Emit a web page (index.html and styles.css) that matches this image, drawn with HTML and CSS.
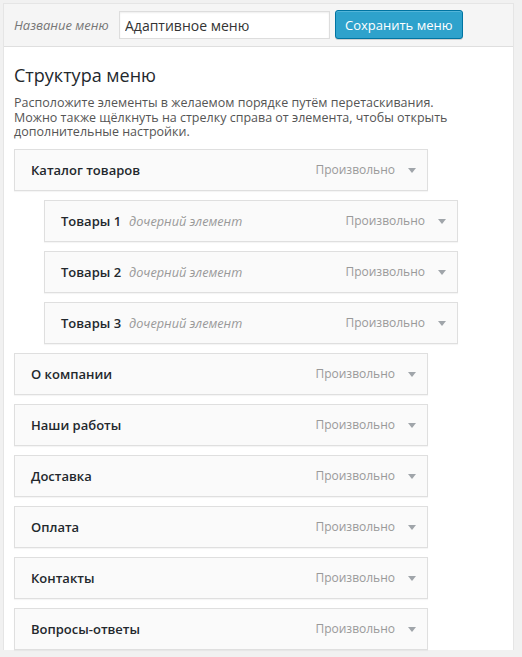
FILE: index.html
```html
<!DOCTYPE html>
<html lang="ru">
<head>
<meta charset="utf-8">
<link rel="stylesheet" href="styles.css">
</head>
<body>
<div class="panel">
  <div class="header">
    <label class="name-label">Название меню</label>
    <input class="name-input" type="text" value="Адаптивное меню">
    <button class="save-btn">Сохранить меню</button>
  </div>
  <div class="body">
    <h3 class="title">Структура меню</h3>
    <p class="desc">Расположите элементы в желаемом порядке путём перетаскивания. Можно также щёлкнуть на стрелку справа от элемента, чтобы открыть дополнительные настройки.</p>
    <ul class="menu">
      <li class="item"><span class="item-title">Каталог товаров</span><span class="item-type">Произвольно</span><span class="arrow"></span></li>
      <li class="item child"><span class="item-title">Товары 1</span><span class="sub">дочерний элемент</span><span class="item-type">Произвольно</span><span class="arrow"></span></li>
      <li class="item child"><span class="item-title">Товары 2</span><span class="sub">дочерний элемент</span><span class="item-type">Произвольно</span><span class="arrow"></span></li>
      <li class="item child"><span class="item-title">Товары 3</span><span class="sub">дочерний элемент</span><span class="item-type">Произвольно</span><span class="arrow"></span></li>
      <li class="item"><span class="item-title">О компании</span><span class="item-type">Произвольно</span><span class="arrow"></span></li>
      <li class="item"><span class="item-title">Наши работы</span><span class="item-type">Произвольно</span><span class="arrow"></span></li>
      <li class="item"><span class="item-title">Доставка</span><span class="item-type">Произвольно</span><span class="arrow"></span></li>
      <li class="item"><span class="item-title">Оплата</span><span class="item-type">Произвольно</span><span class="arrow"></span></li>
      <li class="item"><span class="item-title">Контакты</span><span class="item-type">Произвольно</span><span class="arrow"></span></li>
      <li class="item"><span class="item-title">Вопросы-ответы</span><span class="item-type">Произвольно</span><span class="arrow"></span></li>
    </ul>
  </div>
</div>
</body>
</html>
```
FILE: styles.css
```css
html, body {
  margin: 0;
  padding: 0;
  background: #f1f1f1;
  font-family: "Open Sans", "Noto Sans", sans-serif;
  color: #444;
}
body {
  padding: 3px 6px 0 3px;
}
.panel {
  border: 1px solid #e5e5e5;
  border-bottom: none;
  background: #fff;
  width: 511px;
  box-sizing: border-box;
}
.header {
  background: #f5f5f5;
  border-bottom: 1px solid #dfdfdf;
  height: 43px;
  box-sizing: border-box;
  display: flex;
  align-items: center;
  padding: 0 10px;
}
.name-label {
  font-style: italic;
  font-size: 13px;
  color: #777;
  width: 105px;
}
.name-input {
  box-sizing: border-box;
  width: 211px;
  height: 28px;
  border: 1px solid #ddd;
  box-shadow: inset 0 1px 2px rgba(0,0,0,0.07);
  font-family: inherit;
  font-size: 14px;
  color: #333;
  padding: 0 5px;
  margin: 0 5px 0 0;
  outline: none;
}
.save-btn {
  height: 29px;
  box-sizing: border-box;
  background: #2ea2cc;
  border: 1px solid #0074a2;
  border-radius: 3px;
  box-shadow: inset 0 1px 0 rgba(120,200,230,0.5), 0 1px 0 rgba(0,0,0,0.15);
  color: #fff;
  font-family: inherit;
  font-size: 13px;
  padding: 0 9px;
  margin-top: -1px;
}
.body {
  padding: 0 10px 0 10px;
}
.title {
  font-weight: 400;
  font-size: 18px;
  color: #23282d;
  margin: 16px 0 9px;
  line-height: 24px;
}
.desc {
  font-size: 12.5px;
  line-height: 14.5px;
  color: #555;
  margin: 0 0 9px;
  width: 462px;
}
.menu {
  list-style: none;
  margin: 0;
  padding: 0;
}
.item {
  box-sizing: border-box;
  width: 414px;
  height: 42px;
  border: 1px solid #dfdfdf;
  background: #fafafa;
  display: flex;
  align-items: center;
  padding: 0 10px 0 16px;
  margin-bottom: 9px;
  box-shadow: 0 1px 1px rgba(0,0,0,0.04);
}
.item.child {
  margin-left: 30px;
}
.item-title {
  font-size: 13px;
  font-weight: 550;
  color: #23282d;
}
.sub {
  font-size: 12.7px;
  font-style: italic;
  color: #999;
  margin-left: 8px;
}
.item-type {
  margin-left: auto;
  font-size: 12px;
  color: #999;
}
.arrow {
  width: 0;
  height: 0;
  border-left: 4px solid transparent;
  border-right: 4px solid transparent;
  border-top: 5px solid #a0a5aa;
  margin-left: 13px;
  margin-right: 1px;
  margin-top: 2px;
}
```
